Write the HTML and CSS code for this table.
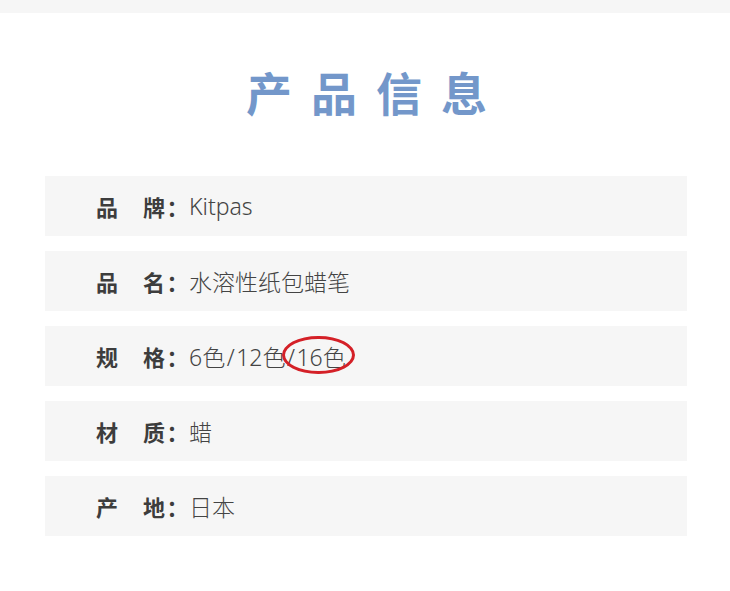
FILE: index.html
```html
<!DOCTYPE html>
<html lang="zh-CN">
<head>
<meta charset="utf-8">
<title>产品信息</title>
<link rel="stylesheet" href="styles.css">
</head>
<body>
<div class="topbar"></div>
<h1 class="title">产品信息</h1>
<ul class="info">
  <li class="row"><span class="label">品　牌：</span><span class="value latin">Kitpas</span></li>
  <li class="row"><span class="label">品　名：</span><span class="value">水溶性纸包蜡笔</span></li>
  <li class="row"><span class="label">规　格：</span><span class="value">6色<span class="slash">/</span>12色<span class="slash">/</span><span class="circled">16色</span></span></li>
  <li class="row"><span class="label">材　质：</span><span class="value">蜡</span></li>
  <li class="row"><span class="label">产　地：</span><span class="value">日本</span></li>
</ul>
</body>
</html>
```
FILE: styles.css
```css
html, body {
  margin: 0;
  padding: 0;
  background: #ffffff;
}
body {
  width: 730px;
  font-family: "Noto Sans", "Noto Sans CJK SC", sans-serif;
}
.topbar {
  height: 13px;
  background: #f6f6f6;
}
.title {
  margin: 55px 0 62px;
  padding-left: 22px;
  text-align: center;
  font-family: "Noto Sans CJK SC", sans-serif;
  font-size: 46px;
  line-height: 46px;
  font-weight: 700;
  letter-spacing: 19px;
  color: #7397ca;
}
.info {
  list-style: none;
  margin: 0 0 0 45px;
  padding: 0;
  width: 642px;
  display: flex;
  flex-direction: column;
  gap: 15px;
}
.row {
  height: 60px;
  background: #f6f6f6;
  display: flex;
  align-items: center;
  padding-left: 51px;
  font-size: 22px;
}
.label {
  font-family: "Noto Sans CJK SC", sans-serif;
  font-weight: 700;
  color: #3d3d3d;
  letter-spacing: 1.5px;
}
.value {
  font-family: "Noto Sans", "Noto Sans CJK SC", sans-serif;
  font-weight: 300;
  color: #444444;
  font-size: 23px;
  margin-left: -1px;
}
.slash {
  padding: 0 1.5px;
}
.circled {
  position: relative;
}
.circled::after {
  content: "";
  position: absolute;
  left: -14px;
  right: -9px;
  top: -5px;
  bottom: -1px;
  border: 3px solid #d42027;
  border-radius: 50%;
}
```
